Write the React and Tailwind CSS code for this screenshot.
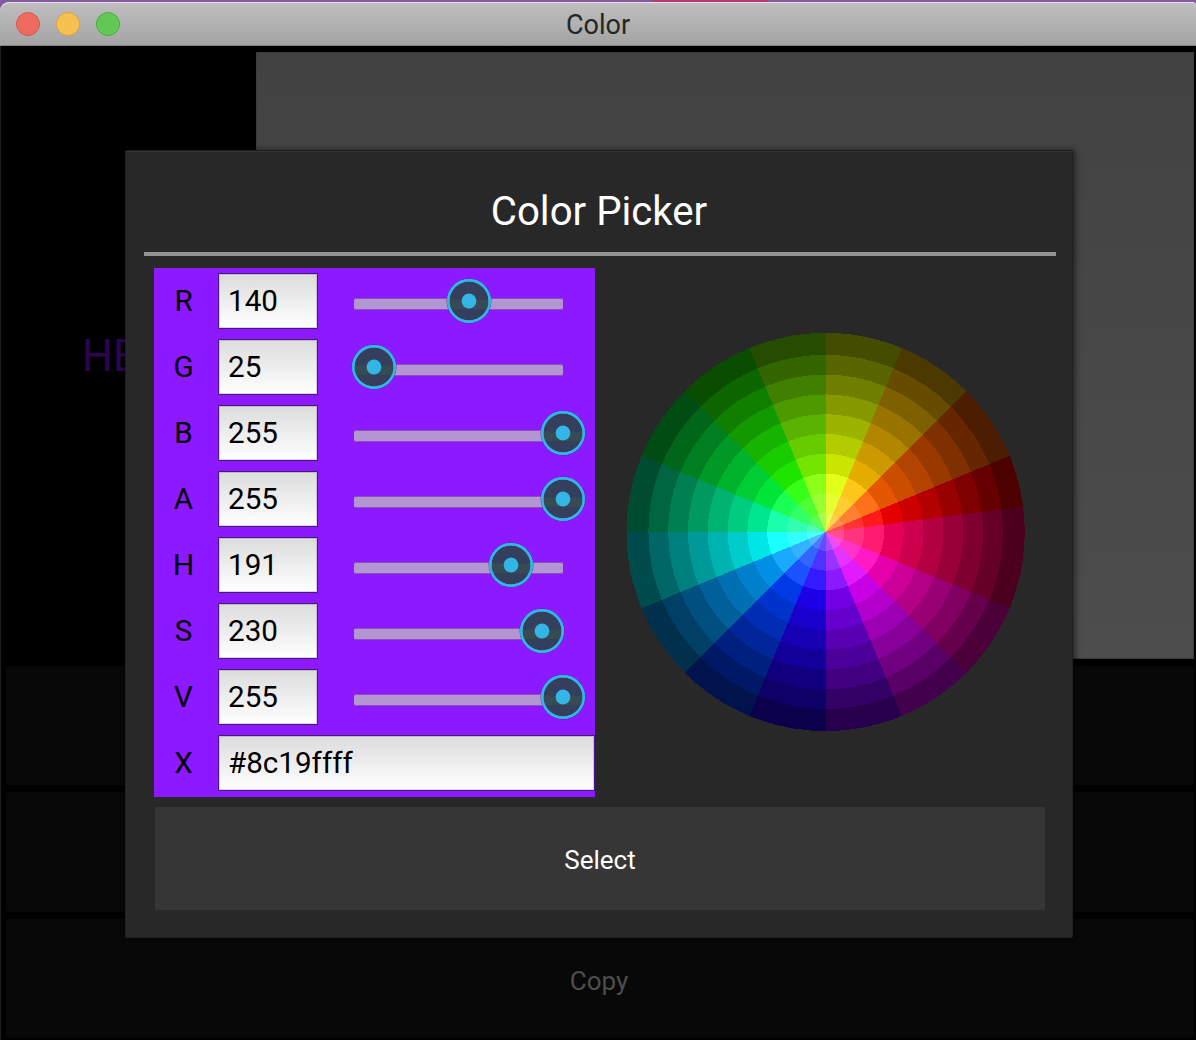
import React from 'react';

const CHANNELS = [
  { label: 'R', value: '140', knob: 468.6 },
  { label: 'G', value: '25', knob: 374.4 },
  { label: 'B', value: '255', knob: 562.8 },
  { label: 'A', value: '255', knob: 562.8 },
  { label: 'H', value: '191', knob: 510.6 },
  { label: 'S', value: '230', knob: 542.3 },
  { label: 'V', value: '255', knob: 562.8 },
];

function hsv(h, s, v) {
  const f = (n) => {
    const k = (n + h / 60) % 6;
    return Math.round(255 * (v - v * s * Math.max(0, Math.min(k, 4 - k, 1))));
  };
  return `rgb(${f(5)},${f(3)},${f(1)})`;
}

const RADII = [18.9, 38.7, 58.4, 78.2, 98, 117.8, 137.6, 157.4, 177.2, 199.1];

function sector(r, a0, a1) {
  const p = (a) => {
    const t = (a * Math.PI) / 180;
    return `${(r * Math.cos(t)).toFixed(2)} ${(-r * Math.sin(t)).toFixed(2)}`;
  };
  return `M0 0L${p(a0)}A${r} ${r} 0 0 0 ${p(a1)}Z`;
}

function ColorWheel() {
  const cells = [];
  for (let ring = 9; ring >= 0; ring--) {
    const s = ring < 3 ? 0.7 + ring * 0.1 : 1;
    const v = ring < 3 ? 1 : 1.2 - ring * 0.1;
    for (let i = 0; i < 16; i++) {
      const start = i === 0 ? 7.3 : i * 22.5;
      const end = i === 15 ? 367.3 : (i + 1) * 22.5;
      cells.push(
        <path key={`${ring}-${i}`} d={sector(RADII[ring], start, end)} fill={hsv(i * 22.5, s, v)} />
      );
    }
  }
  return (
    <svg className="block h-[400px] w-[400px]" viewBox="-200.6 -200 400 400" shapeRendering="crispEdges">
      {cells}
    </svg>
  );
}

function Field({ children, wide }) {
  return (
    <div
      className={
        (wide ? 'w-[377px]' : 'w-[100px]') +
        ' flex h-[56px] shrink-0 items-center border border-[#4a1785] bg-linear-to-b from-[#dcdcdc] to-[#ffffff] pl-[9px] pt-[2px] text-[29.6px] leading-none text-black shadow-[inset_0_0_0_1px_rgba(120,120,120,0.3)]'
      }
    >
      {children}
    </div>
  );
}

function Slider({ knob }) {
  return (
    <div className="relative ml-[36px] h-[12px] w-[209px] rounded-[2px] border-y border-[#8a52b8] bg-[#b396d1]">
      <svg
        className="absolute -top-[21px] h-[46px] w-[46px]"
        style={{ left: knob - 354 - 23 }}
        viewBox="0 0 46 46"
      >
        <circle cx="23" cy="23" r="22.4" fill="#4c2fa0" />
        <circle cx="23" cy="23" r="20.7" fill="#333f5c" stroke="#33b5e5" strokeWidth="2.4" />
        <path d="M4 21.5H42Q43 26 41.5 31H4.5Q3 26 4 21.5Z" fill="#364b54" />
        <circle cx="23" cy="23" r="20.7" fill="none" stroke="#33b5e5" strokeWidth="2.4" />
        <circle cx="23" cy="23" r="7.4" fill="#33b5e5" />
      </svg>
    </div>
  );
}

function TitleBar() {
  return (
    <div className="relative flex h-[44px] shrink-0 items-center rounded-tl-[9px] rounded-tr-[4px] border-b border-[#858585] bg-linear-to-b from-[#bfbfbf] to-[#a4a4a4] pl-[16px] shadow-[inset_0_1px_0_#e4e4e4]">
      <div className="flex gap-[16px]">
        <span className="h-6 w-6 rounded-full border border-[#d9564c] bg-[#ee6b60]" />
        <span className="h-6 w-6 rounded-full border border-[#dfa23d] bg-[#f6c151]" />
        <span className="h-6 w-6 rounded-full border border-[#4dab40] bg-[#62c855]" />
      </div>
      <div className="absolute inset-x-0 top-0 text-center text-[27px] leading-[47px] text-[#252525]">Color</div>
    </div>
  );
}

export default function App() {
  return (
    <div
      className="relative flex h-[1040px] w-[1196px] flex-col overflow-hidden bg-[#8458a3] pt-[2px]"
      style={{ fontFamily: 'Roboto, sans-serif' }}
    >
      <span className="absolute left-[653px] top-0 h-[2px] w-[115px] bg-[#b93b6c]" />
      <TitleBar />

      <div className="flex min-h-0 flex-1 flex-col gap-[7px] border-l border-[#202020] bg-black pb-[2px] pl-[5px] pr-[2px] pt-[6px]">
        <div className="flex h-[607px] shrink-0">
          <div className="flex w-[250px] items-center pl-[76px] pt-[2px] text-[43.5px] text-[#2b0550]">HE</div>
          <div className="flex-1 border border-[#3b3b3b] bg-linear-to-b from-[#424242] to-[#4d4d4d]" />
        </div>
        <div className="h-[119px] shrink-0 rounded-[2px] bg-[#080808]" />
        <div className="h-[120px] shrink-0 rounded-[2px] bg-[#080808]" />
        <div className="flex flex-1 items-center justify-center rounded-[2px] bg-[#080808] pr-[2px] pt-[6px] text-[26px] text-[#4d4d4d]">
          Copy
        </div>
      </div>

      <div className="absolute left-[125px] top-[150px] flex h-[788px] w-[948px] flex-col rounded-[2px] border border-[#202020] bg-[#282828] px-[18px] shadow-[2px_0_6px_rgba(0,0,0,0.55),inset_0_1px_0_#333333]">
        <div className="flex h-[101px] shrink-0 items-end justify-center pb-[16px] text-[40.2px] leading-[48px] text-white">
          Color Picker
        </div>
        <div className="h-[4px] w-[912px] shrink-0 bg-[#939393]" />
        <div className="ml-[10px] mt-[12px] flex h-[529px] shrink-0">
          <div className="flex w-[441px] flex-col bg-[#8c19ff] pt-[5px]">
            {CHANNELS.map((c) => (
              <div key={c.label} className="flex h-[66px] shrink-0 items-start">
                <div className="w-[64px] pr-[5px] text-center text-[29.6px] leading-[57px] text-black">{c.label}</div>
                <Field>{c.value}</Field>
                <div className="flex h-[62px] items-center">
                  <Slider knob={c.knob} />
                </div>
              </div>
            ))}
            <div className="flex h-[61px] shrink-0">
              <div className="w-[64px] pr-[5px] text-center text-[29.6px] leading-[57px] text-black">X</div>
              <Field wide>#8c19ffff</Field>
            </div>
          </div>
          <div className="ml-[30px] mt-[64px]">
            <ColorWheel />
          </div>
        </div>
        <button className="ml-[11px] mt-[10px] flex h-[103px] w-[890px] shrink-0 items-center justify-center rounded-[2px] bg-[#363636] pt-[4px] text-[26px] text-white">
          Select
        </button>
      </div>
    </div>
  );
}
